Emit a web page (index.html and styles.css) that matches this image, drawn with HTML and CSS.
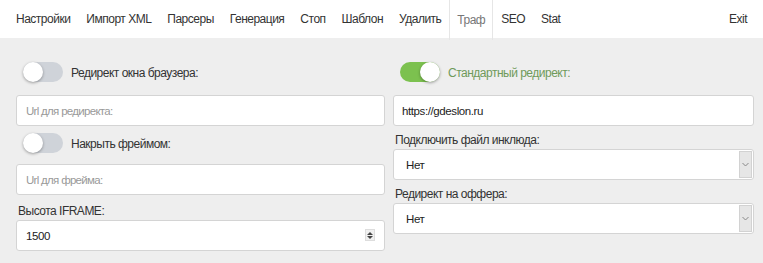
FILE: index.html
```html
<!DOCTYPE html>
<html lang="ru">
<head>
    <meta charset="UTF-8">
    <title>Траф</title>
    <link rel="stylesheet" href="styles.css">
</head>
<body>
    <div class="navbar">
        <a href="#">Настройки</a>
        <a href="#">Импорт XML</a>
        <a href="#">Парсеры</a>
        <a href="#">Генерация</a>
        <a href="#">Стоп</a>
        <a href="#">Шаблон</a>
        <a href="#">Удалить</a>
        <a href="#" class="active">Траф</a>
        <a href="#">SEO</a>
        <a href="#">Stat</a>
        <a href="#" class="exit">Exit</a>
    </div>

    <div class="content">
        <div class="col">
            <label class="toggle-row">
                <span class="switch"><span class="knob"></span></span>
                <span class="toggle-text">Редирект окна браузера:</span>
            </label>
            <input type="text" class="field gap-1" placeholder="Url для редиректа:">
            <label class="toggle-row row-2">
                <span class="switch"><span class="knob"></span></span>
                <span class="toggle-text">Накрыть фреймом:</span>
            </label>
            <input type="text" class="field gap-2" placeholder="Url для фрейма:">
            <div class="label">Высота IFRAME:</div>
            <div class="number">
                <input type="text" class="field" value="1500">
                <span class="spin"><i class="up"></i><i class="down"></i></span>
            </div>
        </div>

        <div class="col">
            <label class="toggle-row on">
                <span class="switch"><span class="knob"></span></span>
                <span class="toggle-text">Стандартный редирект:</span>
            </label>
            <input type="text" class="field gap-1 url" value="https://gdeslon.ru">
            <div class="label">Подключить файл инклюда:</div>
            <div class="select">
                <span>Нет</span>
                <span class="arrow">
                    <svg width="7" height="5" viewBox="0 0 7 5"><path d="M0.5 1 L3.5 4 L6.5 1" fill="none" stroke="#888" stroke-width="1"/></svg>
                </span>
            </div>
            <div class="label">Редирект на оффера:</div>
            <div class="select">
                <span>Нет</span>
                <span class="arrow">
                    <svg width="7" height="5" viewBox="0 0 7 5"><path d="M0.5 1 L3.5 4 L6.5 1" fill="none" stroke="#888" stroke-width="1"/></svg>
                </span>
            </div>
        </div>
    </div>
</body>
</html>
```

FILE: styles.css
```css
* {
    box-sizing: border-box;
    margin: 0;
    padding: 0;
    font-family: 'Liberation Sans', Arial, sans-serif;
}

body {
    background: #eeeeee;
    color: #333;
    font-size: 12px;
    letter-spacing: -0.5px;
}

.navbar {
    height: 38px;
    background: #fff;
    display: flex;
    align-items: stretch;
    padding: 0 8px;
}

.navbar a {
    display: flex;
    align-items: center;
    padding: 0 8px;
    color: #333;
    text-decoration: none;
}

.navbar a.active {
    color: #777;
    border-left: 1px solid #e6e6e6;
    border-right: 1px solid #e6e6e6;
    height: 40px;
    padding: 0 7px;
}

.navbar a.exit {
    margin-left: auto;
}

.content {
    display: grid;
    grid-template-columns: 369px 361px;
    column-gap: 8px;
    padding: 22px 0 0 16px;
}

.col {
    display: flex;
    flex-direction: column;
}

.toggle-row {
    height: 24px;
    display: flex;
    align-items: center;
    gap: 8px;
    padding-left: 7px;
}

.toggle-text {
    padding-top: 2px;
}

.toggle-row.on {
    color: #6f9a5a;
}

.switch {
    position: relative;
    width: 40px;
    height: 20px;
    border-radius: 10px;
    background: #cfd3d9;
}

.knob {
    position: absolute;
    top: 0;
    left: 0;
    width: 20px;
    height: 20px;
    border-radius: 50%;
    background: #fff;
    box-shadow: 0 1px 3px rgba(0, 0, 0, 0.35);
}

.on .switch {
    background: #7cc14f;
}

.on .knob {
    left: 20px;
}

.field {
    width: 100%;
    height: 31px;
    border: 1px solid #d4d4d4;
    border-radius: 3px;
    background: #fff;
    padding: 0 9px;
    font-size: 11.5px;
    letter-spacing: -0.4px;
    color: #222;
    outline: none;
}

.field::placeholder {
    color: #999;
    letter-spacing: -0.7px;
}

.url {
    padding-left: 8px;
}

.gap-1 {
    margin-top: 11px;
}

.row-2 {
    margin-top: 5px;
}

.gap-2 {
    margin-top: 9px;
}

.label {
    height: 16px;
    line-height: 16px;
    margin: 8px 0 1px 2px;
}

.col:last-child .label {
    margin-top: 6px;
}

.number {
    position: relative;
}

.spin {
    position: absolute;
    right: 10px;
    top: 9px;
    width: 10px;
    height: 12px;
    background: #f0f0f0;
    border: 1px solid #ddd;
    display: flex;
    flex-direction: column;
    align-items: center;
    justify-content: center;
    gap: 1px;
}

.spin i {
    width: 0;
    height: 0;
    border-left: 3px solid transparent;
    border-right: 3px solid transparent;
}

.spin .up {
    border-bottom: 3px solid #444;
}

.spin .down {
    border-top: 3px solid #444;
}

.select {
    position: relative;
    height: 31px;
    background: #fff;
    border: 1px solid #d4d4d4;
    border-radius: 3px;
    display: flex;
    align-items: center;
    padding-left: 12px;
    font-size: 11.5px;
    letter-spacing: -0.4px;
    color: #222;
}

.arrow {
    position: absolute;
    top: 1px;
    right: 1px;
    bottom: 1px;
    width: 13px;
    background: #e6e6e6;
    border: 1px solid #d2d2d2;
    display: flex;
    align-items: center;
    justify-content: center;
}
```
